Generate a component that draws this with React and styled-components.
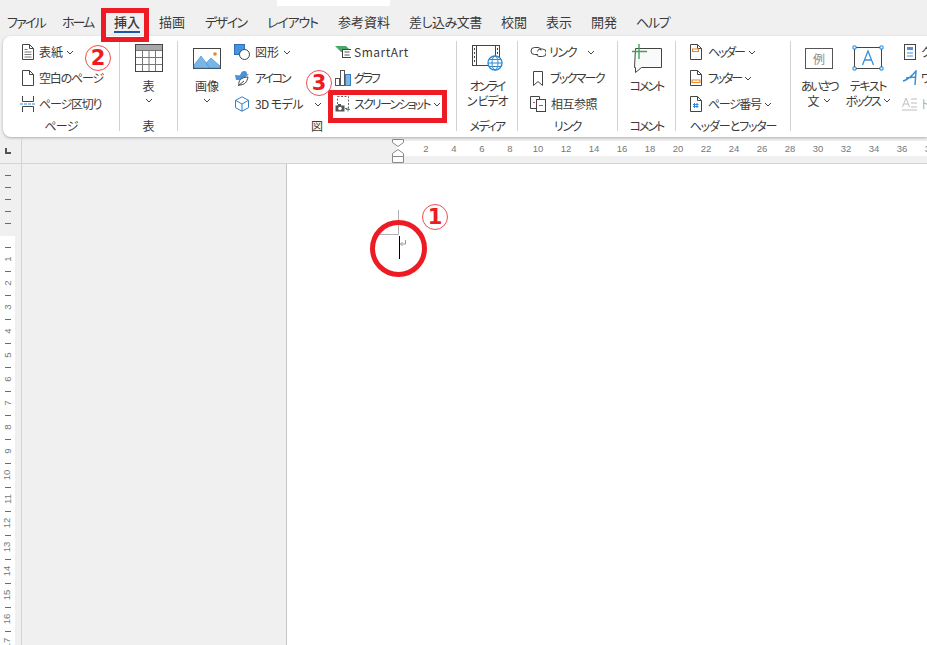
import React from "react";
import styled, { createGlobalStyle } from "styled-components";

const GlobalStyle = createGlobalStyle`
  html, body {
    margin: 0;
    padding: 0;
    background: #f0f0f0;
  }
  body {
    font-family: "Noto Sans CJK JP", "Noto Sans", sans-serif;
    font-feature-settings: "palt";
    color: #3a3a3a;
    overflow: hidden;
  }
`;

const Window = styled.div`
  position: relative;
  width: 927px;
  height: 645px;
  overflow: hidden;
  background: #f0f0f0;
`;

const TopPatch = styled.div`
  position: absolute;
  left: 277px;
  top: 0;
  width: 113px;
  height: 6px;
  background: #fff;
`;

const TabBar = styled.div`
  height: 36px;
  display: flex;
  align-items: flex-start;
  gap: 20px;
  padding-left: 7px;
`;

const Tab = styled.div`
  position: relative;
  width: ${(p) => p.$w}px;
  flex: none;
  font-size: 13px;
  line-height: 18px;
  margin-top: 13px;
  white-space: nowrap;
  letter-spacing: ${(p) => p.$ls || 0}px;
  color: #3a3a3a;
  ${(p) =>
    p.$active &&
    `
    font-weight: 500;
    &::after {
      content: "";
      position: absolute;
      left: 0;
      right: -1px;
      top: 18px;
      height: 2px;
      background: #1c55ab;
    }
  `}
`;

const Ribbon = styled.div`
  margin-left: 3px;
  height: 101px;
  display: flex;
  background: #fff;
  border-radius: 8px 0 0 8px;
  box-shadow: 0 1px 3px rgba(0, 0, 0, 0.28);
  overflow: hidden;
  position: relative;
`;

const Group = styled.div`
  width: ${(p) => p.$w}px;
  flex: none;
  display: flex;
  flex-direction: column;
  padding-top: 3px;
`;

const Sep = styled.div`
  width: 1px;
  height: 90px;
  margin-top: 5px;
  flex: none;
  background: #d2d2d2;
`;

const GroupBody = styled.div`
  height: 79px;
  display: flex;
  padding-left: ${(p) => p.$pl || 0}px;
  justify-content: ${(p) => (p.$center ? "center" : "flex-start")};
`;

const GroupLabel = styled.div`
  height: 16px;
  line-height: 16px;
  font-size: 12px;
  text-align: center;
  white-space: nowrap;
  letter-spacing: ${(p) => p.$ls || 0}px;
`;

const SmallCol = styled.div`
  width: ${(p) => (p.$w ? `${p.$w}px` : "auto")};
  margin-left: ${(p) => p.$ml || 0}px;
  flex: none;
  display: flex;
  flex-direction: column;
`;

const SmallBtn = styled.div`
  height: 26px;
  display: flex;
  align-items: center;
  gap: ${(p) => p.$gap ?? 3}px;
  font-size: 12px;
  white-space: nowrap;
  color: ${(p) => (p.$muted ? "#b0b0b0" : "inherit")};
`;

const Label = styled.span`
  letter-spacing: ${(p) => p.$ls || 0}px;
  margin-top: -2px;
`;

const IconBox = styled.span`
  width: ${(p) => p.$w || 16}px;
  flex: none;
  display: flex;
  justify-content: center;
  svg {
    display: block;
  }
`;

const Chevron = styled.svg.attrs({ viewBox: "0 0 8 5", width: 8, height: 5 })`
  flex: none;
  margin-left: ${(p) => p.$ml ?? 3}px;
  fill: none;
  stroke: #444;
  stroke-width: 1;
`;

const Chev = ({ ml }) => (
  <Chevron $ml={ml}>
    <path d="M1 1l3 3 3-3" />
  </Chevron>
);

const BigBtn = styled.div`
  width: ${(p) => p.$w}px;
  margin-left: ${(p) => p.$ml || 0}px;
  flex: none;
  display: flex;
  flex-direction: column;
  align-items: center;
  font-size: 12px;
  line-height: 15px;
  white-space: nowrap;
`;

const BigIcon = styled.div`
  height: 38.5px;
  display: flex;
  align-items: center;
  justify-content: center;
`;

const BigLine = styled.div`
  height: 15px;
  display: flex;
  align-items: center;
  justify-content: center;
  letter-spacing: ${(p) => p.$ls || 0}px;
`;

/* ---- rulers and document ---- */

const RulerRow = styled.div`
  height: 25px;
  margin-top: 1px;
  display: flex;
  border-bottom: 1px solid #d4d4d4;
`;

const Corner = styled.div`
  width: 21px;
  flex: none;
  border-right: 1px solid #d4d4d4;
  position: relative;
  &::after {
    content: "";
    position: absolute;
    left: 5px;
    top: 10px;
    width: 4px;
    height: 4px;
    border-left: 2px solid #555;
    border-bottom: 2px solid #555;
  }
`;

const RulerGrey = styled.div`
  width: 375px;
  flex: none;
`;

const RulerWhite = styled.div`
  flex: 1;
  height: 15px;
  margin-top: 3px;
  background: #fff;
  display: flex;
  padding-left: 15px;
`;

const RulerNum = styled.div`
  width: 28px;
  flex: none;
  text-align: center;
  font-size: 9.5px;
  line-height: 15px;
  color: #777;
  font-family: "Liberation Sans", sans-serif;
`;

const Body = styled.div`
  height: 481px;
  display: flex;
`;

const VRuler = styled.div`
  width: 21px;
  flex: none;
  border-right: 1px solid #d4d4d4;
  display: flex;
  flex-direction: column;
`;

const VRulerTop = styled.div`
  height: 72px;
  width: 15px;
  padding-top: 5px;
  box-sizing: border-box;
`;

const VRulerWhite = styled.div`
  flex: 1;
  width: 15px;
  background: #fff;
  overflow: hidden;
  padding-top: 5px;
  box-sizing: border-box;
`;

const VCell = styled.div`
  height: 12px;
  display: flex;
  align-items: center;
  justify-content: center;
`;

const VTick = styled.div`
  width: 6px;
  height: 1px;
  background: #6a6a6a;
`;

const VNum = styled.div`
  transform: rotate(-90deg);
  font-size: 9.5px;
  line-height: 12px;
  color: #777;
  font-family: "Liberation Sans", sans-serif;
`;

const Gutter = styled.div`
  width: 264px;
  flex: none;
`;

const Page = styled.div`
  flex: 1;
  background: #fff;
  border-left: 1px solid #c6c6c6;
`;

/* ---- annotations drawn over the screenshot ---- */

const RedBox = styled.div`
  position: absolute;
  left: ${(p) => p.$x}px;
  top: ${(p) => p.$y}px;
  width: ${(p) => p.$w}px;
  height: ${(p) => p.$h}px;
  box-sizing: border-box;
  border: 5px solid #ed1c24;
`;

const Badge = styled.div`
  position: absolute;
  left: ${(p) => p.$x - 13}px;
  top: ${(p) => p.$y - 13}px;
  width: 26px;
  height: 26px;
  box-sizing: border-box;
  border-radius: 50%;
  border: 1px solid #f04d52;
  background: #fff;
  color: #ed1c24;
  font-family: "DejaVu Sans", sans-serif;
  font-weight: 700;
  font-size: 21px;
  line-height: 24px;
  text-align: center;
`;

const RedRing = styled.div`
  position: absolute;
  left: 370px;
  top: 220px;
  width: 57px;
  height: 57px;
  box-sizing: border-box;
  border-radius: 50%;
  border: 5px solid #ed1c24;
`;

const Mark = styled.svg`
  position: absolute;
  left: ${(p) => p.$x}px;
  top: ${(p) => p.$y}px;
`;

/* ---- icons ---- */

const PageShape = () => <path d="M.5.5h7l4 4v11H.5zM7.5.5v4h4" fill="#fff" stroke="#444" />;

const CoverIcon = () => (
  <svg width="12" height="16">
    <PageShape />
    <path d="M2.500 5.500h3M2.500 8h7M2.500 10.500h7M2.500 13h7" stroke="#777" />
  </svg>
);
const BlankIcon = () => (
  <svg width="12" height="16">
    <PageShape />
  </svg>
);
const BreakIcon = () => (
  <svg width="16" height="16">
    <path d="M2.500 0v5.500h11V0M2.500 16v-5.500h11V16" fill="none" stroke="#444" />
    <path d="M0 8h16" stroke="#2b88d8" strokeDasharray="3 1" />
  </svg>
);
const TableIcon = () => (
  <svg width="28" height="28">
    <rect x=".5" y=".5" width="27" height="27" fill="#fff" stroke="#444" />
    <rect x="1" y="1" width="26" height="5" fill="#a8a8a8" />
    <path d="M1 6.500h26M1 13.500h26M1 20.500h26M7.500 6v21M14 6v21M20.500 6v21" stroke="#777" fill="none" />
  </svg>
);
const PictureIcon = () => (
  <svg width="28" height="21">
    <rect x=".5" y=".5" width="27" height="20" fill="#fff" stroke="#444" />
    <path d="M1 17l7-9 9 12H1z" fill="#79b6e8" stroke="#3d8ad0" strokeWidth=".6" />
    <path d="M13 15l5-5 9 8v2H17z" fill="#79b6e8" stroke="#3d8ad0" strokeWidth=".6" />
    <circle cx="22" cy="6" r="1.800" fill="#e8862a" />
  </svg>
);
const ShapesIcon = () => (
  <svg width="16" height="16">
    <rect x=".5" y=".5" width="10" height="10" fill="#4a93d8" stroke="#2a70b8" />
    <circle cx="10.500" cy="10.500" r="5" fill="#fff" stroke="#444" />
  </svg>
);
const IconsIcon = () => (
  <svg width="16" height="16">
    <path d="M1 5c3 0 4 1 5 0s1-4 4-4 3 2 3 3l2 1-3 1c0 3-3 4-5 4H2z" fill="#4a93d8" />
    <path d="M5 15c-1-4 2-8 9-8-1 5-3 8-9 8zM4 16l6-5" fill="#fff" stroke="#444" />
  </svg>
);
const CubeIcon = () => (
  <svg width="16" height="16">
    <path d="M8 .8l6.500 3.500v7.400L8 15.200l-6.500-3.500V4.300zM1.500 4.300L8 8l6.500-3.700M8 8v7.200" fill="none" stroke="#2f80c8" />
  </svg>
);
const SmartArtIcon = () => (
  <svg width="17" height="12">
    <path d="M0 0h11l3 3-3 3H6L3 3z" fill="#4ca868" />
    <rect x="7.500" y="3.500" width="9" height="8" fill="#fff" stroke="#444" />
    <path d="M9.500 6h5M9.500 9h5" stroke="#555" />
  </svg>
);
const ChartIcon = () => (
  <svg width="16" height="16">
    <rect x=".5" y="8.500" width="4" height="7" fill="#fff" stroke="#555" />
    <rect x="5.500" y=".5" width="4" height="15" fill="#fff" stroke="#555" />
    <rect x="10.500" y="4.500" width="5" height="11" fill="#7ab6e6" stroke="#2f80c8" />
  </svg>
);
const ScreenshotIcon = () => (
  <svg width="16" height="16">
    <rect x="2.500" y=".5" width="11" height="12" fill="none" stroke="#666" strokeDasharray="2 1.500" />
    <rect x=".5" y="9.500" width="9" height="6" fill="#555" />
    <rect x="3" y="8" width="3" height="2" fill="#555" />
    <circle cx="5" cy="12.500" r="1.800" fill="#fff" />
    <path d="M13 11.500v4M11 13.500h4" stroke="#3d9a58" />
  </svg>
);
const VideoIcon = () => (
  <svg width="31" height="26">
    <rect x=".5" y=".5" width="27" height="20" fill="#fff" stroke="#444" />
    <path d="M4.500 1v19M23.500 1v10" stroke="#444" fill="none" />
    <path d="M2.500 3v15M25.500 3v8" stroke="#444" strokeDasharray="2 2" fill="none" />
    <circle cx="23" cy="18" r="7" fill="#fff" stroke="#2f8ad0" strokeWidth="1.400" />
    <ellipse cx="23" cy="18" rx="3" ry="7" fill="none" stroke="#2f8ad0" />
    <path d="M16 18h14M17 14.500h12M17 21.500h12" stroke="#2f8ad0" />
  </svg>
);
const LinkIcon = () => (
  <svg width="17" height="14">
    <path d="M8 9.500H4.500a3.500 3.500 0 010-7H8a3 3 0 013 3" fill="none" stroke="#444" />
    <path d="M7.500 6.500a3 3 0 013-2.500h2a3.500 3.500 0 010 7.500H9a3 3 0 01-2.500-2.500" fill="none" stroke="#444" />
  </svg>
);
const BookmarkIcon = () => (
  <svg width="10" height="15">
    <path d="M.5.5h9v14L5 10.500.5 14.500z" fill="none" stroke="#444" />
  </svg>
);
const CrossRefIcon = () => (
  <svg width="16" height="16">
    <path d="M6.500 12.500h-6V.5h9v3" fill="#fff" stroke="#444" />
    <rect x="6.500" y="3.500" width="9" height="12" fill="#fff" stroke="#444" />
    <path d="M3 6.500h2M9 9.500h4" stroke="#e04040" />
  </svg>
);
const CommentIcon = () => (
  <svg width="31" height="29">
    <path d="M4.500 4.500h26v19h-20l-6 5v-5h-1z" fill="#fafafa" stroke="#444" />
    <path d="M8 0v15M1 7.500h15" stroke="#3da35a" strokeWidth="1.400" />
  </svg>
);
const HeaderIcon = () => (
  <svg width="12" height="16">
    <PageShape />
    <rect x="2.500" y="5" width="6" height="2.500" fill="#fff" stroke="#e8862a" />
  </svg>
);
const FooterIcon = () => (
  <svg width="12" height="16">
    <PageShape />
    <rect x="2" y="10" width="8" height="2.500" fill="#fff" stroke="#e8862a" />
  </svg>
);
const PageNumIcon = () => (
  <svg width="12" height="16">
    <PageShape />
    <path d="M4.500 7v5M7 7v5M3 8.500h5.500M3 10.500h5.500" stroke="#2b88d8" />
  </svg>
);
const GreetIcon = styled.div`
  width: 28px;
  height: 21px;
  box-sizing: border-box;
  border: 1px solid #555;
  font-size: 12px;
  line-height: 19px;
  text-align: center;
  color: #8a8a8a;
`;
const TextBoxIcon = () => (
  <svg width="32" height="26">
    <rect x="2.500" y="2.500" width="27" height="21" fill="#fff" stroke="#444" />
    <path d="M10.500 20L16 6l5.500 14M12.500 15h7" fill="none" stroke="#3a8fd8" strokeWidth="1.300" />
    <path d="M1 1h3v3H1zM28 1h3v3h-3zM1 22h3v3H1zM28 22h3v3h-3z" fill="#fff" stroke="#2b88d8" />
  </svg>
);
const QuickIcon = () => (
  <svg width="12" height="16">
    <rect x=".5" y=".5" width="11" height="15" fill="#fff" stroke="#444" />
    <rect x="3" y="3" width="6" height="3" fill="#4a93d8" />
    <path d="M3 9h6M3 12h6" stroke="#4a93d8" />
  </svg>
);
const WordArtIcon = () => (
  <svg width="16" height="16">
    <path d="M1 11c4-1 9-5 13-10l-1 14M4 8l9-1" fill="none" stroke="#3a8fd8" strokeWidth="1.500" />
  </svg>
);
const DropCapIcon = () => (
  <svg width="16" height="14">
    <path d="M.5 10L4 1l3.500 9M2 7h4M9 2h6M9 6h6M9 10h6M0 13h15" fill="none" stroke="#bdbdbd" />
  </svg>
);
const IndentMark = () => (
  <Mark $x={391} $y={138} width="14" height="26">
    <path d="M1.500 1.500h11v3l-5.500 4-5.500-4z" fill="#fff" stroke="#8a8a8a" />
    <path d="M1.500 15.500l5.500-4 5.500 4v3h-11zM1.500 18.500h11v6h-11z" fill="#fff" stroke="#8a8a8a" />
  </Mark>
);
const CursorMark = () => (
  <Mark $x={380} $y={210} width="30" height="50">
    <path d="M18.500 0v24.500H0" fill="none" stroke="#b0b0b0" />
    <path d="M19.500 26v23" stroke="#000" strokeWidth="1" />
    <path d="M25.500 30v4h-5M22.500 32l-2 2 2 2" fill="none" stroke="#9a9a9a" />
  </Mark>
);

const tabs = [
  { label: "ファイル", w: 35, ls: -1.75 },
  { label: "ホーム", w: 32, ls: -2 },
  { label: "挿入", w: 25, active: true },
  { label: "描画", w: 26 },
  { label: "デザイン", w: 42, ls: -1.5 },
  { label: "レイアウト", w: 51, ls: -1.2 },
  { label: "参考資料", w: 51 },
  { label: "差し込み文書", w: 72, ls: -0.5 },
  { label: "校閲", w: 25 },
  { label: "表示", w: 25 },
  { label: "開発", w: 25 },
  { label: "ヘルプ", w: 32, ls: -1.3 },
];
const hNums = Array.from({ length: 19 }, (_, i) => (i + 1) * 2);

const topTicks = [0, 1, 2, 3, 4];
// below the margin a tick and a number take turns every 12px
const sideCells = Array.from({ length: 34 }, (_, i) => (i % 2 === 0 ? null : (i + 1) / 2));

const App = () => {
  return (
    <Window>
      <GlobalStyle />
      <TopPatch />
      <TabBar>
        {tabs.map((t) => (
          <Tab key={t.label} $w={t.w} $ls={t.ls} $active={t.active}>
            {t.label}
          </Tab>
        ))}
      </TabBar>

      <Ribbon>
        <Group $w={116}>
          <GroupBody $pl={16}>
            <SmallCol>
              <SmallBtn $gap={2}>
                <IconBox $w={18}><CoverIcon /></IconBox><Label>表紙</Label><Chev ml={1} />
              </SmallBtn>
              <SmallBtn $gap={2}>
                <IconBox $w={18}><BlankIcon /></IconBox><Label $ls={-1.2}>空白のページ</Label>
              </SmallBtn>
              <SmallBtn $gap={2}>
                <IconBox $w={18}><BreakIcon /></IconBox><Label $ls={-1.2}>ページ区切り</Label>
              </SmallBtn>
            </SmallCol>
          </GroupBody>
          <GroupLabel $ls={-0.7}>ページ</GroupLabel>
        </Group>
        <Sep />

        <Group $w={57}>
          <GroupBody $center>
            <BigBtn $w={40}>
              <BigIcon><TableIcon /></BigIcon>
              <BigLine>表</BigLine>
              <BigLine><Chev ml={0} /></BigLine>
            </BigBtn>
          </GroupBody>
          <GroupLabel>表</GroupLabel>
        </Group>
        <Sep />

        <Group $w={278}>
          <GroupBody>
            <BigBtn $w={38} $ml={10}>
              <BigIcon><PictureIcon /></BigIcon>
              <BigLine>画像</BigLine>
              <BigLine><Chev ml={0} /></BigLine>
            </BigBtn>
            <SmallCol $w={101} $ml={8}>
              <SmallBtn $gap={5}>
                <IconBox><ShapesIcon /></IconBox><Label>図形</Label><Chev ml={-1} />
              </SmallBtn>
              <SmallBtn $gap={5}>
                <IconBox><IconsIcon /></IconBox><Label $ls={-2.2}>アイコン</Label>
              </SmallBtn>
              <SmallBtn $gap={5}>
                <IconBox><CubeIcon /></IconBox><Label $ls={-0.6}>3D モデル</Label><Chev ml={6} />
              </SmallBtn>
            </SmallCol>
            <SmallCol>
              <SmallBtn>
                <IconBox><SmartArtIcon /></IconBox><Label $ls={0.5}>SmartArt</Label>
              </SmallBtn>
              <SmallBtn>
                <IconBox><ChartIcon /></IconBox><Label $ls={-2.3}>グラフ</Label>
              </SmallBtn>
              <SmallBtn>
                <IconBox><ScreenshotIcon /></IconBox><Label $ls={-1.8}>スクリーンショット</Label><Chev ml={0} />
              </SmallBtn>
            </SmallCol>
          </GroupBody>
          <GroupLabel>図</GroupLabel>
        </Group>
        <Sep />

        <Group $w={60}>
          <GroupBody $center>
            <BigBtn $w={56}>
              <BigIcon><VideoIcon /></BigIcon>
              <BigLine $ls={-2}>オンライ</BigLine>
              <BigLine $ls={-1.2}>ン ビデオ</BigLine>
            </BigBtn>
          </GroupBody>
          <GroupLabel $ls={-1.5}>メディア</GroupLabel>
        </Group>
        <Sep />

        <Group $w={99}>
          <GroupBody $pl={12}>
            <SmallCol>
              <SmallBtn $gap={3}>
                <IconBox><LinkIcon /></IconBox><Label $ls={-1.3}>リンク</Label><Chev ml={8} />
              </SmallBtn>
              <SmallBtn $gap={4}>
                <IconBox><BookmarkIcon /></IconBox><Label $ls={-1.7}>ブックマーク</Label>
              </SmallBtn>
              <SmallBtn $gap={5}>
                <IconBox><CrossRefIcon /></IconBox><Label $ls={-0.5}>相互参照</Label>
              </SmallBtn>
            </SmallCol>
          </GroupBody>
          <GroupLabel $ls={-1.3}>リンク</GroupLabel>
        </Group>
        <Sep />

        <Group $w={57}>
          <GroupBody $center>
            <BigBtn $w={50}>
              <BigIcon><CommentIcon /></BigIcon>
              <BigLine $ls={-2}>コメント</BigLine>
            </BigBtn>
          </GroupBody>
          <GroupLabel $ls={-2}>コメント</GroupLabel>
        </Group>
        <Sep />

        <Group $w={114}>
          <GroupBody $pl={14}>
            <SmallCol>
              <SmallBtn $gap={6}>
                <IconBox $w={12}><HeaderIcon /></IconBox><Label $ls={-2.2}>ヘッダー</Label><Chev ml={-2} />
              </SmallBtn>
              <SmallBtn $gap={6}>
                <IconBox $w={12}><FooterIcon /></IconBox><Label $ls={-2.2}>フッター</Label><Chev ml={-3} />
              </SmallBtn>
              <SmallBtn $gap={6}>
                <IconBox $w={12}><PageNumIcon /></IconBox><Label $ls={-1.4}>ページ番号</Label><Chev ml={-3} />
              </SmallBtn>
            </SmallCol>
          </GroupBody>
          <GroupLabel $ls={-1.1}>ヘッダーとフッター</GroupLabel>
        </Group>
        <Sep />

        <Group $w={136}>
          <GroupBody>
            <BigBtn $w={56}>
              <BigIcon><GreetIcon>例</GreetIcon></BigIcon>
              <BigLine $ls={-2.2}>あいさつ</BigLine>
              <BigLine>文<Chev ml={3} /></BigLine>
            </BigBtn>
            <BigBtn $w={46} $ml={-2}>
              <BigIcon><TextBoxIcon /></BigIcon>
              <BigLine $ls={-1.3}>テキスト</BigLine>
              <BigLine $ls={-2}>ボックス<Chev ml={3} /></BigLine>
            </BigBtn>
            <SmallCol $ml={11}>
              <SmallBtn>
                <IconBox><QuickIcon /></IconBox><Label>クイック パーツ</Label>
              </SmallBtn>
              <SmallBtn>
                <IconBox><WordArtIcon /></IconBox><Label>ワードアート</Label>
              </SmallBtn>
              <SmallBtn $muted>
                <IconBox><DropCapIcon /></IconBox><Label>ドロップ キャップ</Label>
              </SmallBtn>
            </SmallCol>
          </GroupBody>
        </Group>
      </Ribbon>

      <RulerRow>
        <Corner />
        <RulerGrey />
        <RulerWhite>
          {hNums.map((n) => (
            <RulerNum key={n}>{n}</RulerNum>
          ))}
        </RulerWhite>
      </RulerRow>

      <Body>
        <VRuler>
          <VRulerTop>
            {topTicks.map((t) => (
              <VCell key={t}><VTick /></VCell>
            ))}
          </VRulerTop>
          <VRulerWhite>
            {sideCells.map((n, i) => (
              <VCell key={i}>{n ? <VNum>{n}</VNum> : <VTick />}</VCell>
            ))}
          </VRulerWhite>
        </VRuler>
        <Gutter />
        <Page />
      </Body>

      <IndentMark />
      <CursorMark />
      <RedBox $x={101} $y={8} $w={48} $h={34} />
      <RedBox $x={328} $y={90} $w={119} $h={33} />
      <RedRing />
      <Badge $x={98} $y={58}>2</Badge>
      <Badge $x={319} $y={83}>3</Badge>
      <Badge $x={435} $y={217}>1</Badge>
    </Window>
  );
};

export default App;
